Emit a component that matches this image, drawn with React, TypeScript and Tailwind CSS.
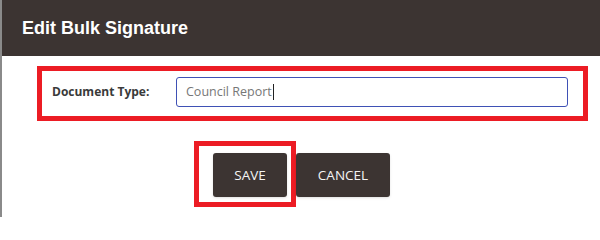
import React from 'react';

const App: React.FC = () => {
  return (
    <div className="w-[600px] h-[217px] bg-white border-l-2 border-[#8a8a8a] overflow-hidden" style={{ fontFamily: '"Open Sans", "Liberation Sans", sans-serif' }}>
      {/* Header */}
      <div className="h-[56px] bg-[#3c3432] flex items-center pl-5">
        <h2 className="text-white text-[18px] font-bold" style={{ fontFamily: '"Liberation Sans", Arial, sans-serif' }}>
          Edit Bulk Signature
        </h2>
      </div>

      {/* Form row */}
      <div className="mt-[10px] ml-[35px] mr-[12px] border-[5px] border-[#ec1c24] flex items-start pl-[10px] pr-[15px] pt-[6px] pb-[9px]">
        <label className="w-[124px] h-[30px] flex items-center text-[12px] font-bold text-[#3a3a3a]">
          Document Type:
        </label>
        <div className="flex-1 h-[30px] border border-[#3f51b5] rounded-[3px] flex items-center pl-[9px]">
          <span className="text-[12.5px] text-[#777777]">Council Report</span>
          <span className="w-px h-[16px] bg-[#222] ml-px"></span>
        </div>
      </div>

      {/* Buttons */}
      <div className="mt-[20px] flex pl-[192px]">
        <div className="border-[5px] border-[#ec1c24] pl-[14px] pr-[4px] pt-[7px] pb-[5px]">
          <button className="w-[74px] h-[44px] bg-[#3c3432] rounded-[3px] text-[#f4f4f4] text-[13.5px] font-medium shadow-sm">
            SAVE
          </button>
        </div>
        <div className="pt-[12px]">
          <button className="w-[94px] h-[44px] bg-[#3c3432] rounded-[3px] text-[#f4f4f4] text-[13.5px] font-medium shadow-sm">
            CANCEL
          </button>
        </div>
      </div>
    </div>
  );
};

export default App;
